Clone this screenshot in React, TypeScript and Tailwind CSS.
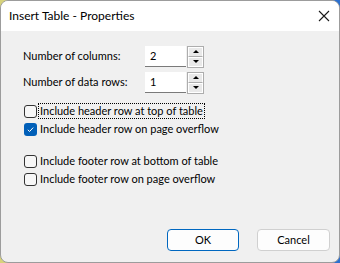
import React from 'react'

function Spinner({ value }: { value: string }) {
  return (
    <div className="flex items-center h-[21px]">
      <div className="w-[41px] h-[21px] bg-white border-b border-[#7a7a7a] flex items-center pl-[5px] text-[11px] text-black">
        {value}
      </div>
      <div className="ml-[1px] flex flex-col w-[17px] h-[22px] border border-[#adadad] bg-[#f0f0f0]">
        <div className="flex-1 flex items-center justify-center border border-white border-b-[#adadad] bg-[#e9e9e9]">
          <div className="w-0 h-0 border-l-[3px] border-r-[3px] border-b-[3px] border-l-transparent border-r-transparent border-b-black" />
        </div>
        <div className="flex-1 flex items-center justify-center border border-white bg-[#e9e9e9]">
          <div className="w-0 h-0 border-l-[3px] border-r-[3px] border-t-[3px] border-l-transparent border-r-transparent border-t-black" />
        </div>
      </div>
    </div>
  )
}

function Check({ label, checked, focused }: { label: string; checked?: boolean; focused?: boolean }) {
  return (
    <div className="h-[18px] flex items-center">
      {checked ? (
        <div className="w-[13px] h-[13px] rounded-[3px] bg-[#005fb8] flex items-center justify-center">
          <svg width="9" height="9" viewBox="0 0 9 9">
            <path d="M1.8 4.8 L3.6 6.5 L7.2 2.6" fill="none" stroke="white" strokeWidth="1" />
          </svg>
        </div>
      ) : (
        <div className="w-[13px] h-[13px] rounded-[3px] border border-[#333] bg-[#f7f7f7]" />
      )}
      <span
        className={`ml-[2px] px-[1px] leading-[14px] whitespace-nowrap text-[11px] text-black ${
          focused ? 'outline outline-1 outline-dotted outline-black' : ''
        }`}
      >
        {label}
      </span>
    </div>
  )
}

export default function App() {
  return (
    <div className="w-[340px] h-[263px] bg-gradient-to-r from-[#d8d37a] to-[#2a6fd0] font-['Lato','Liberation_Sans',sans-serif]">
      <div className="w-full h-full flex flex-col rounded-lg overflow-hidden border border-[#9c9c9c] bg-[#f0f0f0]">
        {/* Title bar */}
        <div className="h-[30px] bg-white flex items-center justify-between pl-[8px] pr-[9px]">
          <span className="text-[12px] text-black">Insert Table - Properties</span>
          <svg width="12" height="12" viewBox="0 0 12 12">
            <path d="M1 1 L11 11 M11 1 L1 11" stroke="#1a1a1a" strokeWidth="1.1" />
          </svg>
        </div>

        {/* Body */}
        <div className="flex-1 flex flex-col pl-[22px] pt-[15px] pr-[9px] pb-[11px]">
          <div className="flex items-center">
            <span className="w-[122px] whitespace-nowrap text-[11px] text-black">Number of columns:</span>
            <Spinner value="2" />
          </div>
          <div className="flex items-center mt-[5px]">
            <span className="w-[122px] whitespace-nowrap text-[11px] text-black">Number of data rows:</span>
            <Spinner value="1" />
          </div>

          <div className="mt-[9px] pl-[1px]">
            <Check label="Include header row at top of table" focused />
            <Check label="Include header row on page overflow" checked />
            <div className="h-[14px]" />
            <Check label="Include footer row at bottom of table" />
            <Check label="Include footer row on page overflow" />
          </div>

          <div className="mt-auto flex justify-end gap-[18px]">
            <button className="w-[72px] h-[22px] rounded-[4px] border border-[#0067c0] bg-[#fdfdfd] text-[11px] text-black">
              OK
            </button>
            <button className="w-[73px] h-[22px] rounded-[4px] border border-[#d0d0d0] bg-[#fdfdfd] text-[11px] text-black">
              Cancel
            </button>
          </div>
        </div>
      </div>
    </div>
  )
}
